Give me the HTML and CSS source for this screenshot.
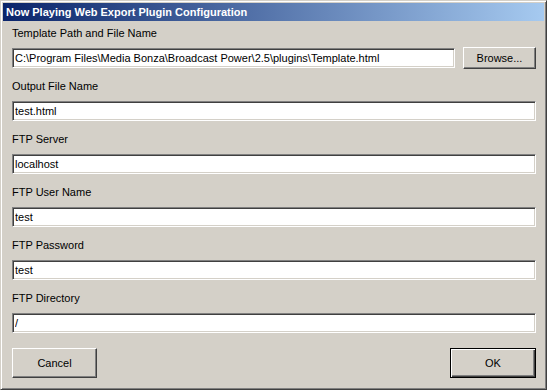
FILE: index.html
```html
<!DOCTYPE html>
<html lang="en">
<head>
  <meta charset="UTF-8">
  <title>Now Playing Web Export Plugin Configuration</title>
  <link rel="stylesheet" href="styles.css">
</head>
<body>
  <div class="window">
    <div class="titlebar">Now Playing Web Export Plugin Configuration</div>

    <form class="content">
      <!-- Template path -->
      <div class="field">
        <label for="template">Template Path and File Name</label>
        <div class="row">
          <input type="text" id="template" value="C:\Program Files\Media Bonza\Broadcast Power\2.5\plugins\Template.html">
          <button type="button" class="btn browse">Browse...</button>
        </div>
      </div>

      <div class="field">
        <label for="output">Output File Name</label>
        <input type="text" id="output" value="test.html">
      </div>

      <div class="field">
        <label for="server">FTP Server</label>
        <input type="text" id="server" value="localhost">
      </div>

      <div class="field">
        <label for="user">FTP User Name</label>
        <input type="text" id="user" value="test">
      </div>

      <div class="field">
        <label for="password">FTP Password</label>
        <input type="text" id="password" value="test">
      </div>

      <div class="field">
        <label for="directory">FTP Directory</label>
        <input type="text" id="directory" value="/">
      </div>

      <!-- Dialog buttons -->
      <div class="actions">
        <button type="button" class="btn cancel">Cancel</button>
        <button type="submit" class="btn ok">OK</button>
      </div>
    </form>
  </div>
</body>
</html>
```

FILE: styles.css
```css
html, body {
  margin: 0;
  padding: 0;
  background: #d4d0c8;
}
body {
  font-family: "Liberation Sans", Arial, sans-serif;
  font-size: 11px;
  color: #000;
}
.window {
  width: 547px;
  height: 390px;
  box-sizing: border-box;
  background: #d4d0c8;
  border-top: 1px solid #d4d0c8;
  border-left: 1px solid #d4d0c8;
  border-right: 1px solid #404040;
  border-bottom: 1px solid #404040;
  box-shadow: inset 1px 1px #fff, inset -1px -1px #808080;
  padding: 2px;
}
.titlebar {
  height: 18px;
  line-height: 18px;
  padding-left: 3px;
  color: #fff;
  font-weight: bold;
  font-size: 11px;
  background: linear-gradient(to right, #0a246a, #a6caf0);
  white-space: nowrap;
}
.content {
  padding: 6px 8px 0 9px;
  display: flex;
  flex-direction: column;
  gap: 12px;
}
.field {
  display: flex;
  flex-direction: column;
  gap: 8px;
}
.field label {
  height: 13px;
  line-height: 13px;
}
.row {
  display: flex;
  align-items: center;
  gap: 8px;
  height: 20px;
}
input[type="text"] {
  box-sizing: border-box;
  height: 20px;
  width: 100%;
  margin: 0;
  padding: 0 2px;
  font-family: "Liberation Sans", Arial, sans-serif;
  font-size: 11px;
  color: #000;
  background: #fff;
  border-top: 1px solid #808080;
  border-left: 1px solid #808080;
  border-right: 1px solid #fff;
  border-bottom: 1px solid #fff;
  box-shadow: inset 1px 1px #404040, inset -1px -1px #d4d0c8;
  outline: none;
}
.row input[type="text"] {
  flex: 1;
  width: auto;
}
.btn {
  box-sizing: border-box;
  margin: 0;
  padding: 0;
  font-family: "Liberation Sans", Arial, sans-serif;
  font-size: 11px;
  color: #000;
  background: #d4d0c8;
  border-top: 1px solid #fff;
  border-left: 1px solid #fff;
  border-right: 1px solid #404040;
  border-bottom: 1px solid #404040;
  box-shadow: inset -1px -1px #808080;
}
.browse {
  width: 73px;
  height: 22px;
  flex: none;
}
.actions {
  display: flex;
  justify-content: space-between;
  margin-top: 3px;
}
.cancel {
  width: 85px;
  height: 30px;
}
.ok {
  width: 86px;
  height: 30px;
  border: 1px solid #000;
  box-shadow: inset 1px 1px #fff, inset -1px -1px #404040, inset -2px -2px #808080;
}
```
